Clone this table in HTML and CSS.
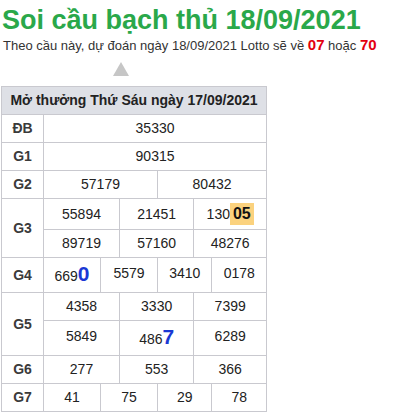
FILE: index.html
```html
<!DOCTYPE html>
<html lang="vi">
<head>
<meta charset="utf-8">
<title>Soi cầu bạch thủ 18/09/2021</title>
<link rel="stylesheet" href="styles.css">
</head>
<body>
<div class="page">
  <h1 class="title">Soi cầu bạch thủ 18/09/2021</h1>
  <p class="subtitle">Theo cầu này, dự đoán ngày 18/09/2021 Lotto sẽ về <b class="pick">07</b> hoặc <b class="pick">70</b></p>
  <div class="pointer"></div>
  <table class="results">
    <colgroup>
      <col class="c-label">
      <col class="c-a"><col class="c-a"><col class="c-a"><col class="c-a"><col class="c-a"><col class="c-a">
      <col class="c-b"><col class="c-b"><col class="c-b"><col class="c-b"><col class="c-b"><col class="c-b">
    </colgroup>
    <tr class="head"><th colspan="13">Mở thưởng Thứ Sáu ngày 17/09/2021</th></tr>
    <tr><th>ĐB</th><td colspan="12">35330</td></tr>
    <tr><th>G1</th><td colspan="12">90315</td></tr>
    <tr><th>G2</th><td colspan="6">57179</td><td colspan="6">80432</td></tr>
    <tr class="r-hl"><th rowspan="2">G3</th><td colspan="4">55894</td><td colspan="4">21451</td><td colspan="4">130<span class="hl">05</span></td></tr>
    <tr><td colspan="4">89719</td><td colspan="4">57160</td><td colspan="4">48276</td></tr>
    <tr class="r-big"><th>G4</th><td colspan="3">669<span class="big">0</span></td><td colspan="3">5579</td><td colspan="3">3410</td><td colspan="3">0178</td></tr>
    <tr><th rowspan="2">G5</th><td colspan="4">4358</td><td colspan="4">3330</td><td colspan="4">7399</td></tr>
    <tr class="r-big"><td colspan="4">5849</td><td colspan="4">486<span class="big">7</span></td><td colspan="4">6289</td></tr>
    <tr><th>G6</th><td colspan="4">277</td><td colspan="4">553</td><td colspan="4">366</td></tr>
    <tr><th>G7</th><td colspan="3">41</td><td colspan="3">75</td><td colspan="3">29</td><td colspan="3">78</td></tr>
  </table>
</div>
</body>
</html>
```
FILE: styles.css
```css
html, body {
  margin: 0;
  padding: 0;
  background: #ffffff;
}

body {
  font-family: "Liberation Sans", Arial, sans-serif;
  color: #222222;
}

.page {
  padding: 5px 0 0 0;
}

.title {
  margin: 0 0 0 2px;
  font-size: 27px;
  line-height: 31px;
  font-weight: bold;
  color: #2aa84a;
}

.subtitle {
  margin: 0 0 0 3px;
  font-size: 13px;
  line-height: 17px;
  color: #333333;
}

.pick {
  font-size: 15px;
  color: #e3000f;
}

.pointer {
  width: 0;
  height: 0;
  margin: 8px 0 0 113px;
  border-left: 8px solid transparent;
  border-right: 8px solid transparent;
  border-bottom: 14px solid #c6c6c6;
}

.results {
  margin: 10px 0 0 1px;
  border-collapse: collapse;
  table-layout: fixed;
  width: 266px;
  font-size: 14px;
}

.c-label { width: 42px; }
.c-a { width: 19px; }
.c-b { width: 18.17px; }

.results th,
.results td {
  border: 1px solid #c9c9cf;
  padding: 5px 0;
  line-height: 17px;
  text-align: center;
  white-space: nowrap;
}

.results th {
  font-size: 14px;
  font-weight: bold;
  color: #3a3a3a;
}

.results .head th {
  background: #dee0e6;
  color: #222222;
}

.results td {
  color: #222222;
}

.results .r-hl td {
  padding: 4px 0;
}

.results .r-big td {
  padding: 4px 0 7px;
}

.hl {
  display: inline-block;
  padding: 2px 3px;
  font-size: 16px;
  line-height: 18px;
  font-weight: bold;
  color: #111111;
  background: #fbd27e;
}

.big {
  font-size: 21px;
  line-height: 23px;
  font-weight: bold;
  color: #1a38d4;
}
```
